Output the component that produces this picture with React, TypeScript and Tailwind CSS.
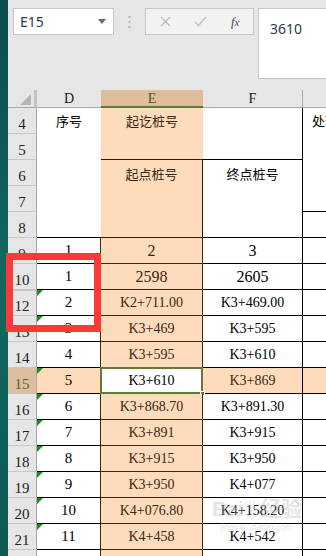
import React from "react";

type Row = {
  n: string;
  d: string;
  e: string;
  f: string;
  big?: boolean;
  tri?: boolean;
  active?: boolean;
  dbl?: boolean;
};

const rows: Row[] = [
  { n: "9", d: "1", e: "2", f: "3", big: true },
  { n: "10", d: "1", e: "2598", f: "2605", big: true },
  { n: "12", d: "2", e: "K2+711.00", f: "K3+469.00", tri: true, dbl: true },
  { n: "13", d: "3", e: "K3+469", f: "K3+595", tri: true },
  { n: "14", d: "4", e: "K3+595", f: "K3+610" },
  { n: "15", d: "5", e: "K3+610", f: "K3+869", tri: true, active: true },
  { n: "16", d: "6", e: "K3+868.70", f: "K3+891.30", tri: true },
  { n: "17", d: "7", e: "K3+891", f: "K3+915", tri: true },
  { n: "18", d: "8", e: "K3+915", f: "K3+950", tri: true },
  { n: "19", d: "9", e: "K3+950", f: "K4+077", tri: true },
  { n: "20", d: "10", e: "K4+076.80", f: "K4+158.20", tri: true },
  { n: "21", d: "11", e: "K4+458", f: "K4+542", tri: true },
  { n: "22", d: "", e: "", f: "" },
];

const serif = "font-['Liberation_Serif','Noto_Sans_CJK_SC',serif]";
const cjk = "font-['Noto_Sans_CJK_SC','Noto_Sans',sans-serif]";

function RowHeader({ label, active, dbl }: { label: string; active?: boolean; dbl?: boolean }) {
  return (
    <div
      className={
        "w-[29px] shrink-0 flex items-end justify-center pb-[1px] border-b border-r border-b-[#c6c6c6] border-r-[#a9a9a9] text-[15px] leading-none " +
        serif +
        " " +
        (active ? "bg-[#dcbd9e] text-[#56672e]" : "bg-[#e6e6e6] text-[#222]") +
        (dbl ? " border-t border-t-[#c6c6c6]" : "")
      }
    >
      {label}
    </div>
  );
}

function DataRow({ r }: { r: Row }) {
  const valSize = r.big ? "text-[16px]" : "text-[14px]";
  return (
    <div className="flex h-[26px]">
      <RowHeader label={r.n} active={r.active} dbl={r.dbl} />
      <div
        className={
          "relative w-[64px] shrink-0 flex items-center justify-center border-b border-r border-b-black border-r-[#3d2610] text-[15px] text-black " +
          serif +
          (r.active ? " bg-[#fddbbb]" : " bg-white")
        }
      >
        {r.tri && (
          <div className="absolute left-0 top-0 w-0 h-0 border-t-[6px] border-r-[6px] border-t-[#1f8a1f] border-r-transparent" />
        )}
        {r.d}
      </div>
      <div
        className={
          "relative w-[102px] shrink-0 flex items-center justify-center border-b border-r border-b-[#3d2610] border-r-[#3d2610] " +
          valSize +
          " " +
          serif +
          (r.active ? " bg-white text-black" : " bg-[#fddbbb] text-[#3a2712]")
        }
      >
        {r.e}
        {r.active && (
          <>
            <div className="absolute -left-[1px] -top-[1px] -right-[1px] -bottom-[1px] border-2 border-[#5e7b38]" />
            <div className="absolute -right-[3px] -bottom-[3px] w-[5px] h-[5px] bg-[#5e7b38] border border-white" />
          </>
        )}
      </div>
      <div
        className={
          "w-[100px] shrink-0 flex items-center justify-center border-b border-r border-black " +
          valSize +
          " " +
          serif +
          (r.active ? " bg-[#fddbbb] text-[#3a2712]" : " bg-white text-black")
        }
      >
        {r.f}
      </div>
      <div className={"flex-1 border-b border-black" + (r.active ? " bg-[#fddbbb]" : " bg-white")} />
    </div>
  );
}

export default function App() {
  return (
    <div className="w-[326px] h-[556px] overflow-hidden flex bg-[#e6e6e6] relative">
      {/* desktop strip */}
      <div className="w-[8px] shrink-0 bg-gradient-to-b from-[#0c4d49] via-[#13685f] to-[#0e5a53]" />

      <div className="flex-1 flex flex-col min-w-0">
        {/* formula bar area */}
        <div className="h-[90px] shrink-0 flex items-start pt-[8px] pl-[5px] bg-[#e6e6e6]">
          <div className="w-[101px] h-[27px] bg-white border border-[#c6c6c6] flex items-center justify-between pl-[6px] pr-[7px]">
            <span className="text-[14px] text-[#2f3a4a] font-['Noto_Sans',sans-serif] leading-none">E15</span>
            <svg width="8" height="5" viewBox="0 0 8 5">
              <path d="M0 0 H8 L4 5 Z" fill="#6b6b6b" />
            </svg>
          </div>
          <div className="w-[31px] h-[27px] flex items-center justify-center">
            <svg width="3" height="12" viewBox="0 0 3 12">
              <rect x="0.5" y="0" width="2" height="2" fill="#b3b3b3" />
              <rect x="0.5" y="5" width="2" height="2" fill="#b3b3b3" />
              <rect x="0.5" y="10" width="2" height="2" fill="#b3b3b3" />
            </svg>
          </div>
          <div className="w-[109px] h-[27px] bg-[#f2f2f2] border border-[#c6c6c6] flex items-center">
            <div className="w-[38px] flex justify-center pl-[2px]">
              <svg width="11" height="11" viewBox="0 0 11 11">
                <path d="M1 1 L10 10 M10 1 L1 10" stroke="#bdbdbd" strokeWidth="1.3" />
              </svg>
            </div>
            <div className="w-[34px] flex justify-center">
              <svg width="13" height="11" viewBox="0 0 13 11">
                <path d="M1 6 L4.5 9.5 L12 1" stroke="#c4c4c4" strokeWidth="1.6" fill="none" />
              </svg>
            </div>
            <div className="w-[36px] flex justify-center">
              <span className="text-[13px] italic text-[#4d4d4d] font-['Liberation_Serif',serif] leading-none">
                f<span className="text-[11px]">x</span>
              </span>
            </div>
          </div>
          <div className="ml-[4px] flex-1 h-[71px] bg-white border border-r-0 border-[#c6c6c6] pl-[11px] pt-[7px]">
            <span className="text-[14px] text-[#2f3a4a] font-['Noto_Sans',sans-serif] leading-none">3610</span>
          </div>
        </div>

        {/* column headers */}
        <div className="h-[18px] shrink-0 flex">
          <div className="w-[29px] shrink-0 relative bg-[#e6e6e6] border-b border-[#a9a9a9] border-r-[3px] border-r-[#c3c3c3] flex items-end justify-end pr-[3px] pb-[2px]">
            <svg width="11" height="11" viewBox="0 0 11 11">
              <path d="M11 0 V11 H0 Z" fill="#b5b5b5" />
            </svg>
          </div>
          <div className={"w-[64px] shrink-0 bg-[#e6e6e6] border-b border-[#a9a9a9] flex items-center justify-center text-[14px] text-[#1a1a1a] " + serif}>D</div>
          <div className={"w-[102px] shrink-0 bg-[#dfbd9b] border-b-2 border-[#5e7b38] flex items-center justify-center text-[14px] text-[#4a5a22] " + serif}>E</div>
          <div className={"w-[100px] shrink-0 bg-[#e6e6e6] border-b border-r border-[#a9a9a9] flex items-center justify-center text-[14px] text-[#1a1a1a] " + serif}>F</div>
          <div className="flex-1 bg-[#e6e6e6] border-b border-[#a9a9a9]" />
        </div>

        {/* header block rows 4-8 */}
        <div className="grid grid-cols-[29px_64px_102px_100px_1fr] grid-rows-[repeat(5,26px)] shrink-0">
          {["4", "5", "6", "7", "8"].map((n, i) => (
            <div
              key={n}
              className={
                "col-start-1 flex items-end justify-center pb-[1px] bg-[#e6e6e6] text-[#222] border-b border-r border-b-[#c6c6c6] border-r-[#a9a9a9] text-[15px] leading-none " +
                serif
              }
              style={{ gridRowStart: i + 1 }}
            >
              {n}
            </div>
          ))}
          <div className={"col-start-2 row-start-1 row-span-5 bg-white border-b border-black flex justify-center pt-[6px] text-[13px] text-black leading-[14px] " + cjk}>
            序号
          </div>
          <div className={"col-start-3 row-start-1 row-span-2 bg-[#fddbbb] border-b border-[#2a1a0a] flex justify-center pt-[6px] text-[13px] text-[#3a2712] leading-[14px] " + cjk}>
            起讫桩号
          </div>
          <div className="col-start-4 row-start-1 row-span-2 bg-white border-b border-r border-black" />
          <div className={"col-start-5 row-start-1 row-span-4 bg-white border-b border-black pt-[6px] pl-[9px] text-[13px] text-black leading-[14px] whitespace-nowrap overflow-hidden " + cjk}>
            处理
          </div>
          <div className={"col-start-3 row-start-3 row-span-3 bg-[#fddbbb] border-b border-r border-[#2a1a0a] flex justify-center pt-[7px] text-[13px] text-[#3a2712] leading-[14px] " + cjk}>
            起点桩号
          </div>
          <div className={"col-start-4 row-start-3 row-span-3 bg-white border-b border-r border-black flex justify-center pt-[7px] text-[13px] text-black leading-[14px] " + cjk}>
            终点桩号
          </div>
          <div className="col-start-5 row-start-5 bg-white border-b border-black" />
        </div>

        {/* data rows */}
        <div className="flex flex-col">
          {rows.map((r) => (
            <DataRow key={r.n} r={r} />
          ))}
        </div>
      </div>

      {/* red annotation box */}
      <div className="absolute left-[6px] top-[253px] w-[95px] h-[79px] border-[7px] border-[#fa3a3a]" />

      {/* faint watermark */}
      <div className="absolute left-[212px] top-[498px] flex flex-col items-center pointer-events-none opacity-40">
        <span className="text-[21px] font-bold text-[#bdbdbd] leading-none font-['Liberation_Sans','Noto_Sans_CJK_SC',sans-serif] tracking-tight">
          Bai<span className="text-[18px]">❀</span>经验
        </span>
        <span className="text-[9px] text-[#c4c4c4] leading-none mt-[4px] font-['Liberation_Sans',sans-serif]">jingyan.baidu.com</span>
      </div>
    </div>
  );
}
